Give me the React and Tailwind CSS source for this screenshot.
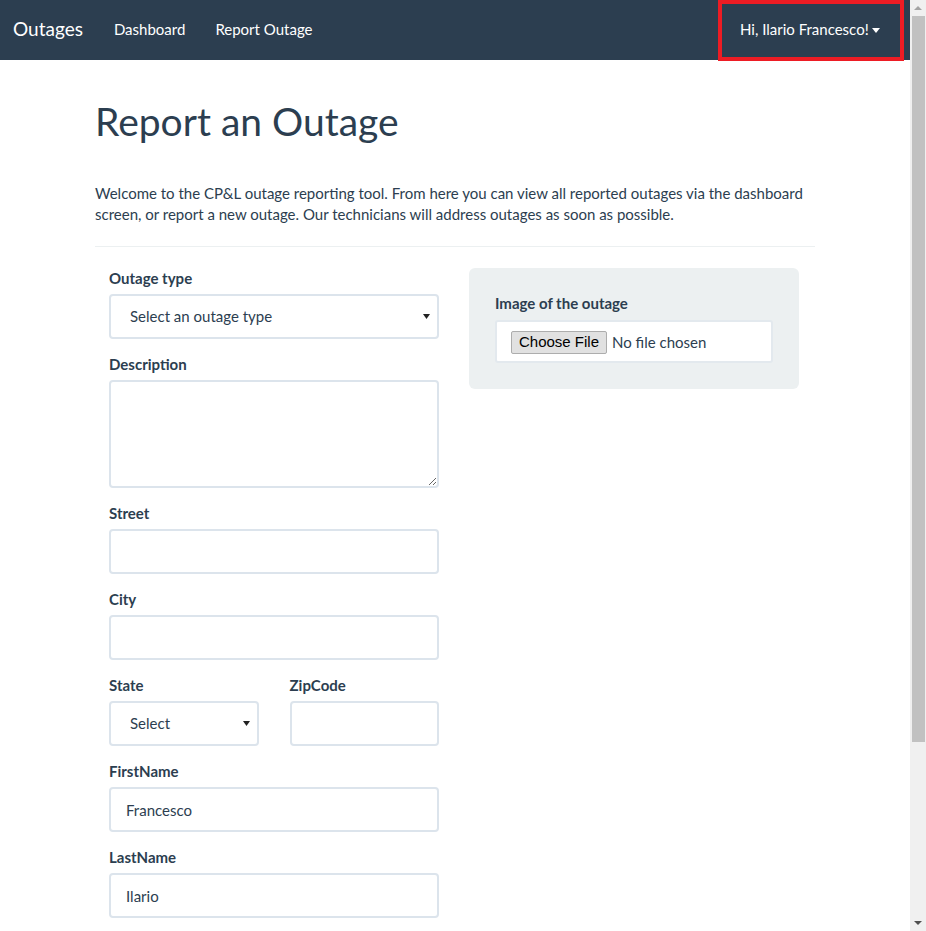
import React, { useState } from 'react';

const font = { fontFamily: 'Lato, "Open Sans", sans-serif' };

const Caret = ({ className, w = 8, h = 5 }) => (
    <svg width={w} height={h} viewBox={`0 0 ${w} ${h}`} className={className}>
        <path d={`M0 0 L${w} 0 L${w / 2} ${h} Z`} fill="currentColor" />
    </svg>
);

const Field = ({ label, children }) => (
    <div className="mb-[15px]">
        <label className="block mb-[5px] text-[15px] leading-[21px] font-bold text-[#2c3e50]">{label}</label>
        {children}
    </div>
);

const inputCls =
    'block w-full h-[45px] border-2 border-[#dce4ec] rounded-[4px] px-[15px] text-[15px] text-[#2c3e50] bg-white outline-none';

const Select = ({ value, onChange, options, placeholder }) => (
    <div className="relative">
        <select
            value={value}
            onChange={onChange}
            className={inputCls + ' appearance-none pl-[19px] pr-8'}
            style={font}
        >
            <option value="">{placeholder}</option>
            {options.map((o) => (
                <option key={o} value={o}>{o}</option>
            ))}
        </select>
        <Caret w={7} h={5} className="absolute right-[9px] top-[20px] text-[#222] pointer-events-none" />
    </div>
);

// fake window scrollbar, the screenshot was taken with one showing
const Scrollbar = () => (
    <div className="w-[16px] h-screen shrink-0 bg-[#f0f0f0] flex flex-col">
        <div className="h-[16px] flex items-center justify-center">
            <svg width="8" height="4" viewBox="0 0 8 4">
                <path d="M0 4 L8 4 L4 0 Z" fill="#a3a3a3" />
            </svg>
        </div>
        <div className="ml-[2px] w-[13px] h-[726px] bg-[#c1c1c1]" />
        <div className="flex-1" />
        <div className="h-[16px] flex items-center justify-center">
            <svg width="8" height="4" viewBox="0 0 8 4">
                <path d="M0 0 L8 0 L4 4 Z" fill="#505050" />
            </svg>
        </div>
    </div>
);

const App = () => {
    const [type, setType] = useState('');
    const [state, setState] = useState('');
    const [firstName, setFirstName] = useState('Francesco');
    const [lastName, setLastName] = useState('Ilario');

    return (
        <div className="flex h-screen overflow-hidden bg-white text-[#2c3e50]" style={font}>
            <div className="flex-1 min-w-0 overflow-hidden">
                <nav className="h-[60px] bg-[#2c3e50] flex items-stretch justify-between">
                    <div className="flex items-center pl-[13px] pb-[1px] text-white">
                        <span className="text-[19px] pr-[31px]">Outages</span>
                        <a className="text-[15px] pr-[30px]">Dashboard</a>
                        <a className="text-[15px]">Report Outage</a>
                    </div>
                    <div className="flex items-stretch pr-[6px]">
                        <div className="w-[186px] h-[61px] border-4 border-[#ed1c24] flex items-center pl-[18px] pb-[2px] text-white text-[15px]">
                            <span>Hi, Ilario Francesco!</span>
                            <Caret className="ml-[3px] mt-[1px]" />
                        </div>
                    </div>
                </nav>

                <div className="w-[750px] mx-auto px-[15px]">
                    <h1 className="mt-[40px] text-[39px] leading-[43px] font-normal">Report an Outage</h1>
                    <p className="mt-[40px] text-[15px] leading-[21px]">
                        Welcome to the CP&amp;L outage reporting tool. From here you can view all reported outages via the dashboard
                        screen, or report a new outage. Our technicians will address outages as soon as possible.
                    </p>
                    <hr className="mt-[21px] mb-[21px] border-0 border-t border-[#ecf0f1]" />

                    <div className="flex gap-[30px] pl-[14px]">
                        <form className="w-[330px]">
                            <Field label="Outage type">
                                <Select
                                    value={type}
                                    onChange={(e) => setType(e.target.value)}
                                    placeholder="Select an outage type"
                                    options={['Power', 'Gas', 'Water']}
                                />
                            </Field>
                            <Field label="Description">
                                <textarea className={inputCls + ' h-[108px] py-[10px]'} style={font} />
                            </Field>
                            <Field label="Street">
                                <input type="text" className={inputCls} style={font} />
                            </Field>
                            <Field label="City">
                                <input type="text" className={inputCls} style={font} />
                            </Field>
                            <div className="flex gap-[31px]">
                                <div className="flex-1">
                                    <Field label="State">
                                        <Select
                                            value={state}
                                            onChange={(e) => setState(e.target.value)}
                                            placeholder="Select"
                                            options={['NC', 'SC']}
                                        />
                                    </Field>
                                </div>
                                <div className="flex-1">
                                    <Field label="ZipCode">
                                        <input type="text" className={inputCls} style={font} />
                                    </Field>
                                </div>
                            </div>
                            <Field label="FirstName">
                                <input
                                    type="text"
                                    value={firstName}
                                    onChange={(e) => setFirstName(e.target.value)}
                                    className={inputCls}
                                    style={font}
                                />
                            </Field>
                            <Field label="LastName">
                                <input
                                    type="text"
                                    value={lastName}
                                    onChange={(e) => setLastName(e.target.value)}
                                    className={inputCls}
                                    style={font}
                                />
                            </Field>
                        </form>

                        <div className="w-[330px] self-start bg-[#ecf0f1] rounded-[6px] px-[26px] pt-[25px] pb-[26px]">
                            <label className="block mb-[6px] text-[15px] leading-[21px] font-bold">Image of the outage</label>
                            <div className="h-[43px] bg-white border-2 border-[#e3e9ee] rounded-[3px] flex items-center pl-[14px]">
                                <span
                                    className="h-[23px] mt-[1px] px-[7px] flex items-center bg-[#e1e1e1] border border-[#adadad] rounded-[2px] text-[15px] text-black"
                                    style={{ fontFamily: '"Liberation Sans", Arial, sans-serif' }}
                                >
                                    Choose File
                                </span>
                                <span className="ml-[5px] mt-[1px] text-[15px]">No file chosen</span>
                            </div>
                        </div>
                    </div>
                </div>
            </div>
            <Scrollbar />
        </div>
    );
};

export default App;
